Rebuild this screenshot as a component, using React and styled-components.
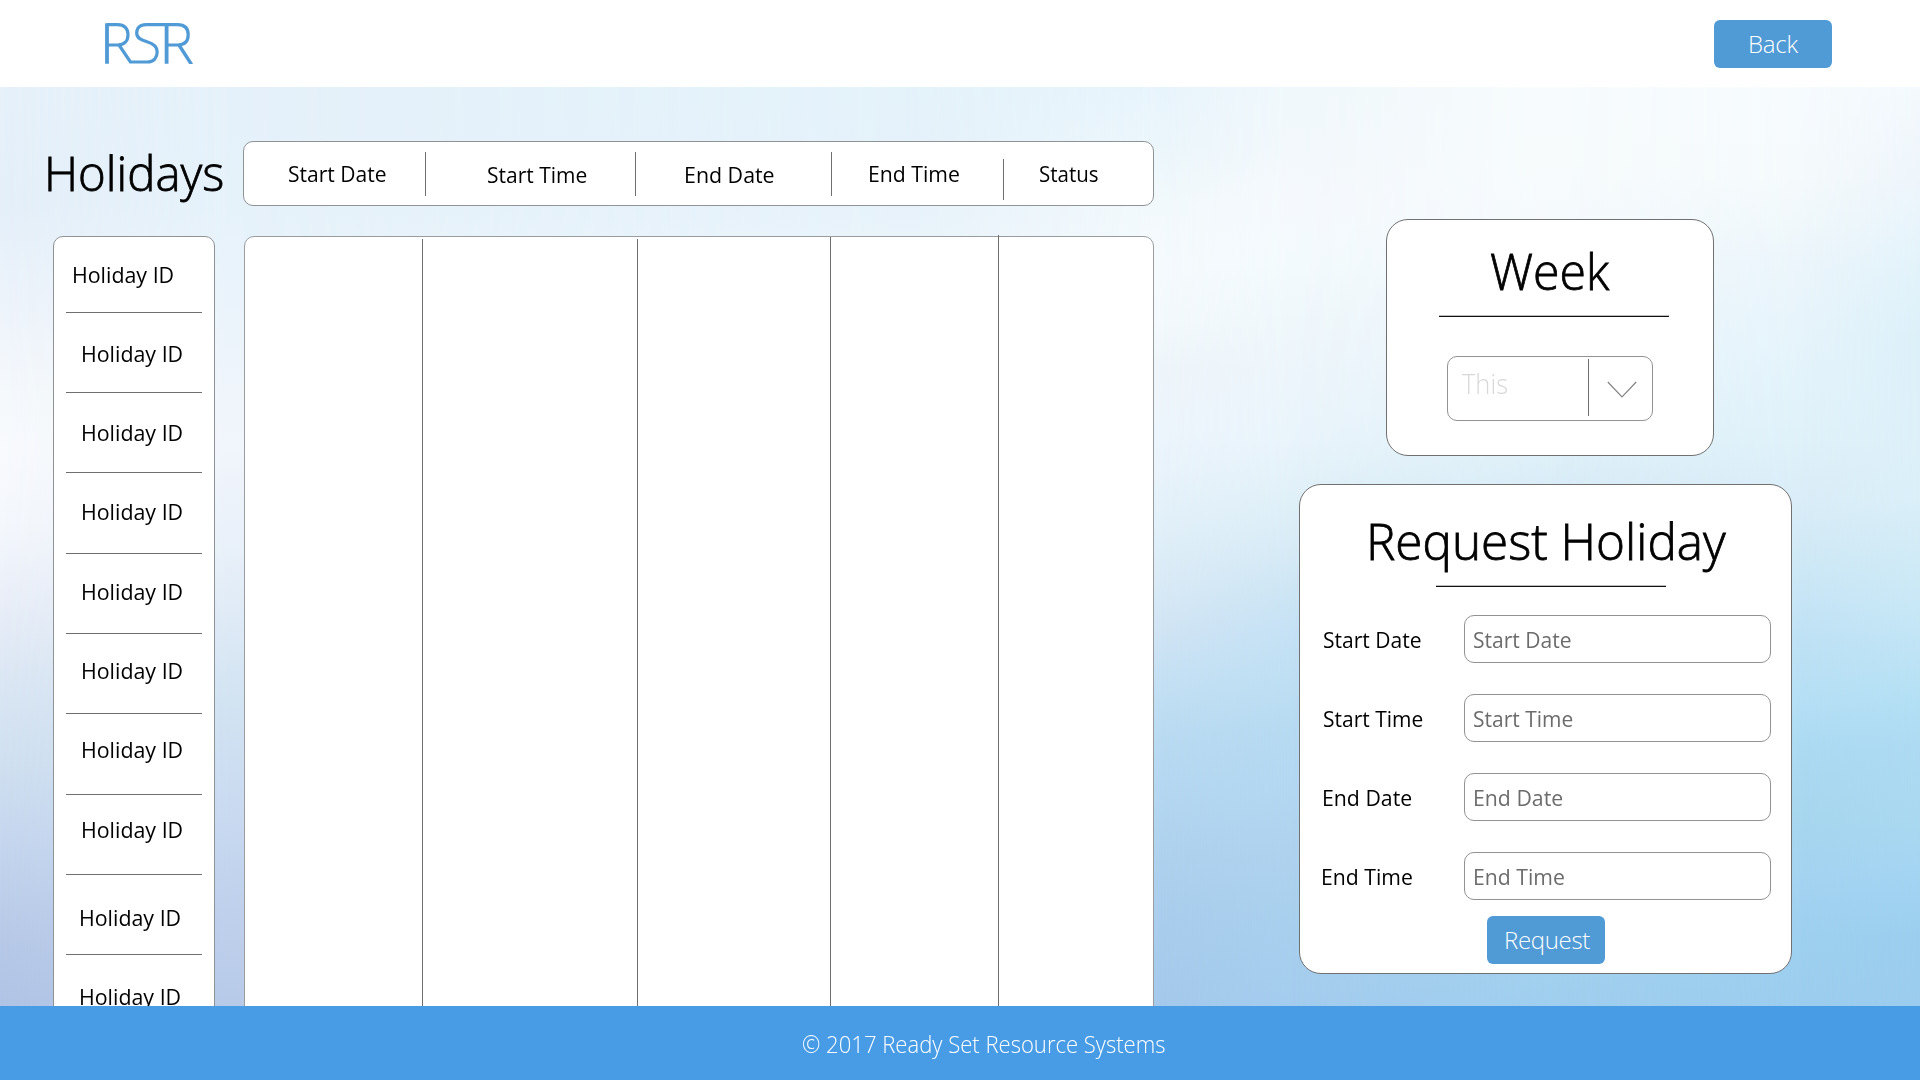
import React from "react";
import styled, { createGlobalStyle } from "styled-components";

const GlobalStyle = createGlobalStyle`
  *, *::before, *::after { box-sizing: border-box; }
  body {
    margin: 0;
    background: #fff;
    color: #000;
    font-family: "Open Sans", "Noto Sans", sans-serif;
  }
`;

const Page = styled.div`
  display: flex;
  flex-direction: column;
  width: 1920px;
  height: 1080px;
  overflow: hidden;
`;

/* ---------- type ---------- */

const Text = styled.span`
  display: block;
  flex: none;
  width: max-content;
  white-space: nowrap;
  font-size: 22.5px;
  line-height: 31px;
  font-weight: 400;
  transform: scaleX(${(p) => p.$fit || 1});
  transform-origin: left center;
`;

const Heading = styled.h1`
  margin: 0;
  width: max-content;
  white-space: nowrap;
  font-size: 50px;
  line-height: 68px;
  font-weight: 300;
  -webkit-text-stroke: 0.8px #000;
  transform: scaleX(${(p) => p.$fit || 1});
  transform-origin: left center;
`;

const PageTitle = styled(Heading)`
  height: 60px;
  margin: -2px 0 0 43.5px;
  font-size: 48.5px;
  line-height: 66px;
`;

/* ---------- top bar ---------- */

const TopBar = styled.header`
  flex: none;
  display: flex;
  justify-content: space-between;
  align-items: flex-start;
  height: 87px;
  padding: 20px 88px 0 105px;
  background: #fff;
`;

const LogoMark = styled.svg`
  display: block;
  width: 89px;
  height: 41px;
  margin-top: 3px;
  fill: none;
  stroke: #509ad6;
  stroke-width: 3.2;
`;

const Button = styled.button`
  display: flex;
  justify-content: center;
  align-items: flex-start;
  width: 118px;
  height: 48px;
  padding: 7px 0 0;
  border: 0;
  border-radius: 6px;
  background: #509ad6;
  color: #fff;
  font-family: inherit;
  font-size: 24px;
  line-height: 33px;
  font-weight: 300;
  letter-spacing: -0.2px;
`;

/* ---------- backdrop ---------- */

const Main = styled.main`
  position: relative;
  isolation: isolate;
  flex: none;
  display: flex;
  align-items: flex-start;
  height: 919px;
  padding-top: 54px;
  overflow: hidden;
`;

const Wash = styled.div`
  position: absolute;
  inset: 0;
  z-index: -1;
  background: linear-gradient(to bottom, ${(p) => p.$stops});
  ${(p) =>
    p.$to
      ? `mask-image: linear-gradient(to right, transparent ${p.$from}px, #000 ${p.$to}px);`
      : ""}
`;

const washes = [
  {
    stops:
      "#e6f1fa 0, #e4eff9 117px, #eff4fb 234px, #f5f9fc 305px, #f8fafd 363px, #f4f7fc 440px, #e9eef8 516px, #dce7f4 586px, #d0e0f0 674px, #c4d5ee 762px, #b7c9e7 850px, #b1c4e6 919px",
  },
  {
    from: 0,
    to: 230,
    stops:
      "#e5f1fa 0, #e6f2fa 123px, #eaf3fb 213px, #eff5fb 313px, #f1f5fc 360px, #e8f0f9 464px, #dbe8f5 553px, #d2e3f2 613px, #cadbf1 713px, #bfd1ec 813px, #b7cae8 919px",
  },
  { from: 230, to: 900, stops: "#e4f2fa 0, #e5f1fa 90px, #e8f3fa 150px, #f1f6fc 919px" },
  {
    from: 900,
    to: 1160,
    stops:
      "#e8f4fc 0, #ebf6fb 59px, #f2f9fc 117px, #f5fafd 176px, #f3f9fc 234px, #eef5fa 281px, #edf5fc 340px, #e9f3fb 381px, #e1f0f9 440px, #d9eaf6 498px, #d0e4f4 545px, #c6e1f4 586px, #badbf2 645px, #b5d7f1 703px, #afd2ee 762px, #aaceed 821px, #a4c9eb 919px",
  },
  {
    from: 1160,
    to: 1290,
    stops:
      "#f0f8fb 0, #f2f8fc 59px, #f5f9fd 117px, #f3fafd 176px, #eff7fb 234px, #ecf5fb 293px, #e9f4fb 352px, #e0f0f8 410px, #d8ebf6 457px, #cde5f4 504px, #c5e1f5 545px, #bfdff3 586px, #b6daf1 645px, #b3d7f1 703px, #afd2ee 762px, #a9d0ed 821px, #a4ccee 919px",
  },
  {
    from: 1290,
    to: 1560,
    stops:
      "#f7fbfd 0, #f7fbfc 73px, #f5fafd 132px, #e6f3fa 310px, #ddeff8 373px, #d8ecf7 400px, #a0cfee 903px, #a0ceee 919px",
  },
  {
    from: 1560,
    to: 1800,
    stops:
      "#f6fbfe 0, #f5fafc 88px, #f0f8fb 135px, #ebf5fb 176px, #e7f4fb 234px, #e3f3fb 293px, #dff1f9 352px, #daedf8 410px, #d2eaf6 457px, #c7e5f6 510px, #bee1f5 557px, #b5dff5 615px, #abdaf2 662px, #a7d6ef 733px, #a4d3f1 791px, #9ed0ef 850px, #9ccdee 919px",
  },
  {
    from: 1800,
    to: 1920,
    stops:
      "#f3f9fd 0, #eef5fb 88px, #e8f4fb 135px, #e1f2fa 193px, #dcf0f9 252px, #ddf0f9 352px, #daeff8 410px, #d2ebf6 457px, #cae8f6 510px, #c0e4f5 557px, #b3dff4 615px, #addaf2 662px, #a9d8f0 733px, #a3d4f2 791px, #9bceee 850px, #9bccee 919px",
  },
];

/* ---------- holiday list ---------- */

const IdColumn = styled.section`
  flex: none;
  width: 243px;
`;

const IdList = styled.ul`
  list-style: none;
  width: 162px;
  height: 900px;
  margin: 37px 0 0 53px;
  padding: 0 12px;
  border: 1px solid #8f9396;
  border-radius: 10px;
  background: #fff;
`;

const IdRow = styled.li`
  height: ${(p) => p.$height}px;
  padding: ${(p) => p.$top}px 0 0 ${(p) => p.$indent}px;
  border-bottom: 1px solid #6f6f6f;
`;

const idRows = [
  { height: 76, top: 22, indent: 6.3 },
  { height: 80, top: 25, indent: 14.8 },
  { height: 80, top: 24, indent: 14.8 },
  { height: 81, top: 23, indent: 14.8 },
  { height: 80, top: 22, indent: 14.8 },
  { height: 80, top: 21, indent: 14.8 },
  { height: 81, top: 20, indent: 14.8 },
  { height: 80, top: 19, indent: 14.8 },
  { height: 80, top: 27, indent: 13.3 },
  { height: 80, top: 26, indent: 13.3 },
];

/* ---------- table ---------- */

const TableColumn = styled.section`
  flex: none;
  width: 911px;
`;

const TableHead = styled.div`
  display: flex;
  height: 65px;
  border: 1px solid #8f9396;
  border-radius: 10px;
  background: #fff;
`;

const HeadCell = styled.div`
  flex: ${(p) => (p.$width ? "none" : "1")};
  width: ${(p) => (p.$width ? `${p.$width}px` : "auto")};
  display: flex;
  justify-content: space-between;
  padding-left: ${(p) => p.$indent}px;

  ${Text} {
    margin: ${(p) => p.$top}px -20px 0 0;
  }
`;

const HeadDivider = styled.i`
  width: 1px;
  height: ${(p) => (p.$low ? 41 : 44)}px;
  margin-top: ${(p) => (p.$low ? 17 : 10)}px;
  background: #6f6f6f;
`;

const headCells = [
  { label: "Start Date", width: 182, indent: 43.8, top: 16, fit: 0.935 },
  { label: "Start Time", width: 210, indent: 61.2, top: 17, fit: 0.933 },
  { label: "End Date", width: 196, indent: 48.4, top: 17, fit: 0.95 },
  { label: "End Time", width: 172, indent: 35.5, top: 16, fit: 0.943, low: true },
  { label: "Status", indent: 35, top: 16, fit: 0.91 },
];

const TableBody = styled.div`
  display: flex;
  width: 910px;
  height: 900px;
  margin: 30px 0 0 1px;
  border: 1px solid #9a9d9f;
  border-radius: 10px;
  background: #fff;
`;

const BodyColumn = styled.div`
  flex: none;
  width: ${(p) => p.$width}px;
  margin-top: ${(p) => p.$offset}px;
  border-right: 1px solid #6f6f6f;
`;

const bodyColumns = [
  { width: 178, offset: 2 },
  { width: 215, offset: 2 },
  { width: 193, offset: 0 },
  { width: 168, offset: -2 },
];

/* ---------- side cards ---------- */

const SideColumn = styled.aside`
  flex: none;
  display: flex;
  flex-direction: column;
  gap: 28px;
  padding: 78px 0 0 145px;
`;

const Card = styled.section`
  border: 1px solid #707070;
  border-radius: 22px;
  background: #fff;
`;

const WeekCard = styled(Card)`
  width: 328px;
  height: 237px;
  margin-left: 87px;
  padding: 17px 0 0 52px;

  ${Heading} {
    margin-left: 50.5px;
  }
`;

const Rule = styled.hr`
  width: 230px;
  height: 2px;
  margin: 10px 0 0;
  border: 0;
  border-top: 1px solid #bdbdbd;
  background: #111;
`;

const WeekSelect = styled.div`
  display: flex;
  width: 206px;
  height: 65px;
  margin: 39px 0 0 8px;
  padding-left: 14px;
  border: 1px solid #929292;
  border-radius: 10px;

  ${Text} {
    margin-top: 7px;
    font-size: 28px;
    line-height: 38px;
    font-weight: 300;
    color: #d8d8d8;
  }
`;

const SelectArrow = styled.div`
  display: flex;
  height: 57px;
  margin: 2px 0 0 auto;
  padding: 22px 15px 0 18.5px;
  border-left: 1px solid #6f6f6f;
`;

const Chevron = styled.svg`
  display: block;
  width: 30px;
  height: 18px;
  fill: none;
  stroke: #808080;
  stroke-width: 1.1;
`;

const RequestCard = styled(Card)`
  width: 493px;
  height: 490px;
  padding-top: 22px;

  ${Heading} {
    margin-left: 66px;
  }

  ${Rule} {
    margin-left: 135.5px;
  }

  ${Button} {
    margin: 16px 0 0 187px;
    padding-left: 2px;
    letter-spacing: -0.35px;
  }
`;

const Form = styled.div`
  display: grid;
  gap: 31px;
  margin-top: 28px;
`;

const FormRow = styled.label`
  display: grid;
  grid-template-columns: 164px 307px;
  height: 48px;

  > ${Text} {
    margin: 9px 0 0 ${(p) => p.$indent}px;
  }
`;

const Field = styled.span`
  display: block;
  padding: 8px 0 0 ${(p) => p.$indent}px;
  border: 1px solid #929292;
  border-radius: 10px;
  color: #6c6c6c;
`;

const fields = [
  { label: "Start Date", indent: 22.8, inset: 7.6, fit: 0.936 },
  { label: "Start Time", indent: 22.8, inset: 7.6, fit: 0.933 },
  { label: "End Date", indent: 22.4, inset: 7.8, fit: 0.945 },
  { label: "End Time", indent: 21.4, inset: 7.8, fit: 0.943 },
];

/* ---------- footer ---------- */

const Footer = styled.footer`
  flex: none;
  height: 74px;
  padding: 22px 0 0 802px;
  background: #489ce5;
  color: #fff;

  ${Text} {
    font-size: 23.5px;
    line-height: 32px;
    font-weight: 300;
  }
`;

function Logo() {
  return (
    <LogoMark viewBox="105 23 89 41" aria-label="RSR">
      <path strokeWidth="3.8" d="M107 63.7V23.2M166.6 63.7V24.6" />
      <path d="M107 24.6H117.5C124.5 24.6 128 28.6 128 34.8S124.5 45 117.5 45H107" />
      <path d="M119 45L130.4 62H147.5C153.8 62 157.2 57.5 157.2 52C157.2 46.3 153.5 43.6 147 41.8C140.5 40 136.7 38 136.7 33C136.7 28 140 24.6 146 24.6H177.5C184.7 24.6 188.2 28.6 188.2 34.8S184.7 45 177.5 45H167" />
      <path strokeWidth="3.4" d="M179 45L191.5 64.5" />
    </LogoMark>
  );
}

export default function App() {
  return (
    <Page>
      <GlobalStyle />
      <TopBar>
        <Logo />
        <Button>Back</Button>
      </TopBar>

      <Main>
        {washes.map((w) => (
          <Wash key={w.to || 0} $from={w.from} $to={w.to} $stops={w.stops} />
        ))}

        <IdColumn>
          <PageTitle $fit={0.976}>Holidays</PageTitle>
          <IdList>
            {idRows.map((r, i) => (
              <IdRow key={i} $height={r.height} $top={r.top} $indent={r.indent}>
                <Text $fit={0.95}>Holiday ID</Text>
              </IdRow>
            ))}
          </IdList>
        </IdColumn>

        <TableColumn>
          <TableHead>
            {headCells.map((c) => (
              <HeadCell key={c.label} $width={c.width} $indent={c.indent} $top={c.top}>
                <Text $fit={c.fit}>{c.label}</Text>
                {c.width && <HeadDivider $low={c.low} />}
              </HeadCell>
            ))}
          </TableHead>
          <TableBody>
            {bodyColumns.map((c) => (
              <BodyColumn key={c.width} $width={c.width} $offset={c.offset} />
            ))}
          </TableBody>
        </TableColumn>

        <SideColumn>
          <WeekCard>
            <Heading as="h2" $fit={0.965}>Week</Heading>
            <Rule />
            <WeekSelect>
              <Text $fit={0.91}>This</Text>
              <SelectArrow>
                <Chevron viewBox="0 0 30 18">
                  <path d="M0.8 1L15 16L29.2 1" />
                </Chevron>
              </SelectArrow>
            </WeekSelect>
          </WeekCard>

          <RequestCard>
            <Heading as="h2" $fit={0.988}>Request Holiday</Heading>
            <Rule />
            <Form>
              {fields.map((f) => (
                <FormRow key={f.label} $indent={f.indent}>
                  <Text $fit={f.fit}>{f.label}</Text>
                  <Field $indent={f.inset}>
                    <Text $fit={f.fit}>{f.label}</Text>
                  </Field>
                </FormRow>
              ))}
            </Form>
            <Button>Request</Button>
          </RequestCard>
        </SideColumn>
      </Main>

      <Footer>
        <Text $fit={0.939}>© 2017 Ready Set Resource Systems</Text>
      </Footer>
    </Page>
  );
}
